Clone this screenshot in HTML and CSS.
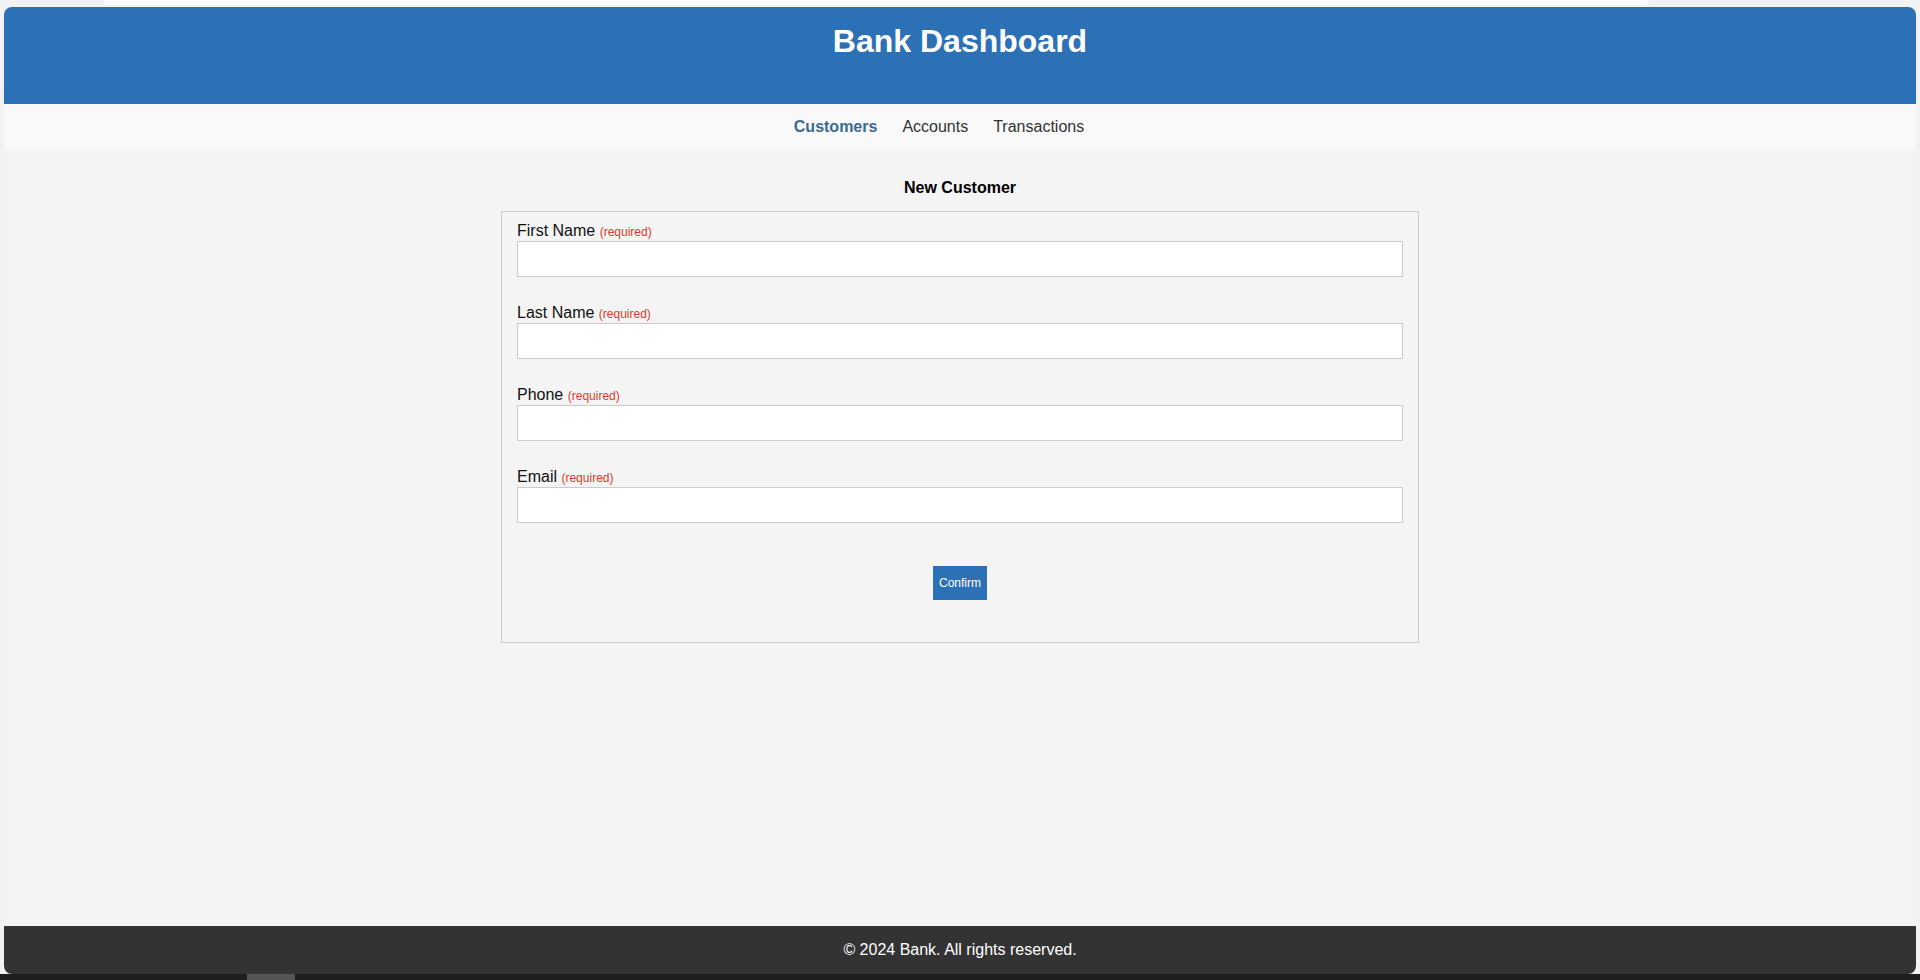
FILE: index.html
```html
<!DOCTYPE html>
<html lang="en">
<head>
<meta charset="utf-8">
<title>Bank Dashboard</title>
<link rel="stylesheet" href="styles.css">
</head>
<body>
<div class="topstrip"><div class="tab"></div></div>
<div class="window">
  <header class="header">
    <h1 class="title">Bank Dashboard</h1>
  </header>
  <nav class="nav">
    <a class="nav-link active" href="#">Customers</a>
    <a class="nav-link" href="#">Accounts</a>
    <a class="nav-link" href="#">Transactions</a>
  </nav>
  <main class="main">
    <h2 class="heading">New Customer</h2>
    <form class="form">
      <div class="field">
        <label class="label">First Name <span class="req">(required)</span></label>
        <input class="input" type="text">
      </div>
      <div class="field">
        <label class="label">Last Name <span class="req">(required)</span></label>
        <input class="input" type="text">
      </div>
      <div class="field">
        <label class="label">Phone <span class="req">(required)</span></label>
        <input class="input" type="text">
      </div>
      <div class="field">
        <label class="label">Email <span class="req">(required)</span></label>
        <input class="input" type="text">
      </div>
      <div class="actions">
        <button class="btn" type="button">Confirm</button>
      </div>
    </form>
  </main>
  <footer class="footer">© 2024 Bank. All rights reserved.</footer>
</div>
<div class="bottombar"><div class="thumb"></div></div>
</body>
</html>
```

FILE: styles.css
```css
* { box-sizing: border-box; }

body {
  margin: 0;
  height: 980px;
  overflow: hidden;
  display: flex;
  flex-direction: column;
  background: #f2f2f2;
  font-family: "Liberation Sans", Arial, sans-serif;
  font-size: 16px;
  color: #111;
}

.topstrip {
  height: 7px;
  padding-left: 104px;
  flex: none;
}

.tab {
  width: 1545px;
  height: 5px;
  background: #ffffff;
  border-bottom-right-radius: 6px;
}

.window {
  margin: 0 4px;
  height: 967px;
  flex: none;
  display: flex;
  flex-direction: column;
  border-radius: 8px;
  overflow: hidden;
  background: #f4f4f4;
}

.header {
  background: #2c71b5;
  height: 97px;
  padding-top: 16px;
  text-align: center;
  flex: none;
}

.title {
  margin: 0;
  font-size: 32px;
  font-weight: bold;
  color: #ffffff;
  line-height: 37px;
}

.nav {
  background: #f9f9f9;
  height: 45px;
  display: flex;
  justify-content: center;
  align-items: center;
  gap: 25px;
  padding-right: 42px;
  flex: none;
}

.nav-link {
  color: #333333;
  text-decoration: none;
  font-size: 16px;
}

.nav-link.active {
  color: #3a6a93;
  font-weight: bold;
}

.main {
  flex: 1;
  padding-top: 30px;
}

.heading {
  margin: 0 0 14px;
  font-size: 16px;
  line-height: 18px;
  font-weight: bold;
  text-align: center;
  color: #000;
}

.form {
  width: 918px;
  margin: 0 auto;
  border: 1px solid #cccccc;
  padding: 10px 15px 42px;
}

.field + .field {
  margin-top: 27px;
}

.label {
  display: block;
  height: 19px;
  line-height: 18px;
  font-size: 16px;
  color: #111;
}

.req {
  font-size: 12px;
  line-height: 12px;
  color: #e0392b;
}

.input {
  display: block;
  width: 100%;
  height: 36px;
  border: 1px solid #cccccc;
  background: #ffffff;
  margin: 0;
  padding: 8px;
  font-family: inherit;
  font-size: 16px;
}

.actions {
  margin-top: 43px;
  text-align: center;
}

.btn {
  background: #2c71b5;
  color: #ffffff;
  border: none;
  font-family: "Liberation Sans", Arial, sans-serif;
  font-size: 12px;
  line-height: 14px;
  height: 34px;
  padding: 0 6px;
  margin: 0;
}

.footer {
  background: #333333;
  color: #ffffff;
  text-align: center;
  font-size: 16px;
  line-height: 18px;
  padding: 15px 0;
  flex: none;
}

.bottombar {
  height: 6px;
  flex: none;
  background: #1f1f1f;
  padding-left: 247px;
}

.thumb {
  width: 48px;
  height: 100%;
  background: #555555;
}
```
